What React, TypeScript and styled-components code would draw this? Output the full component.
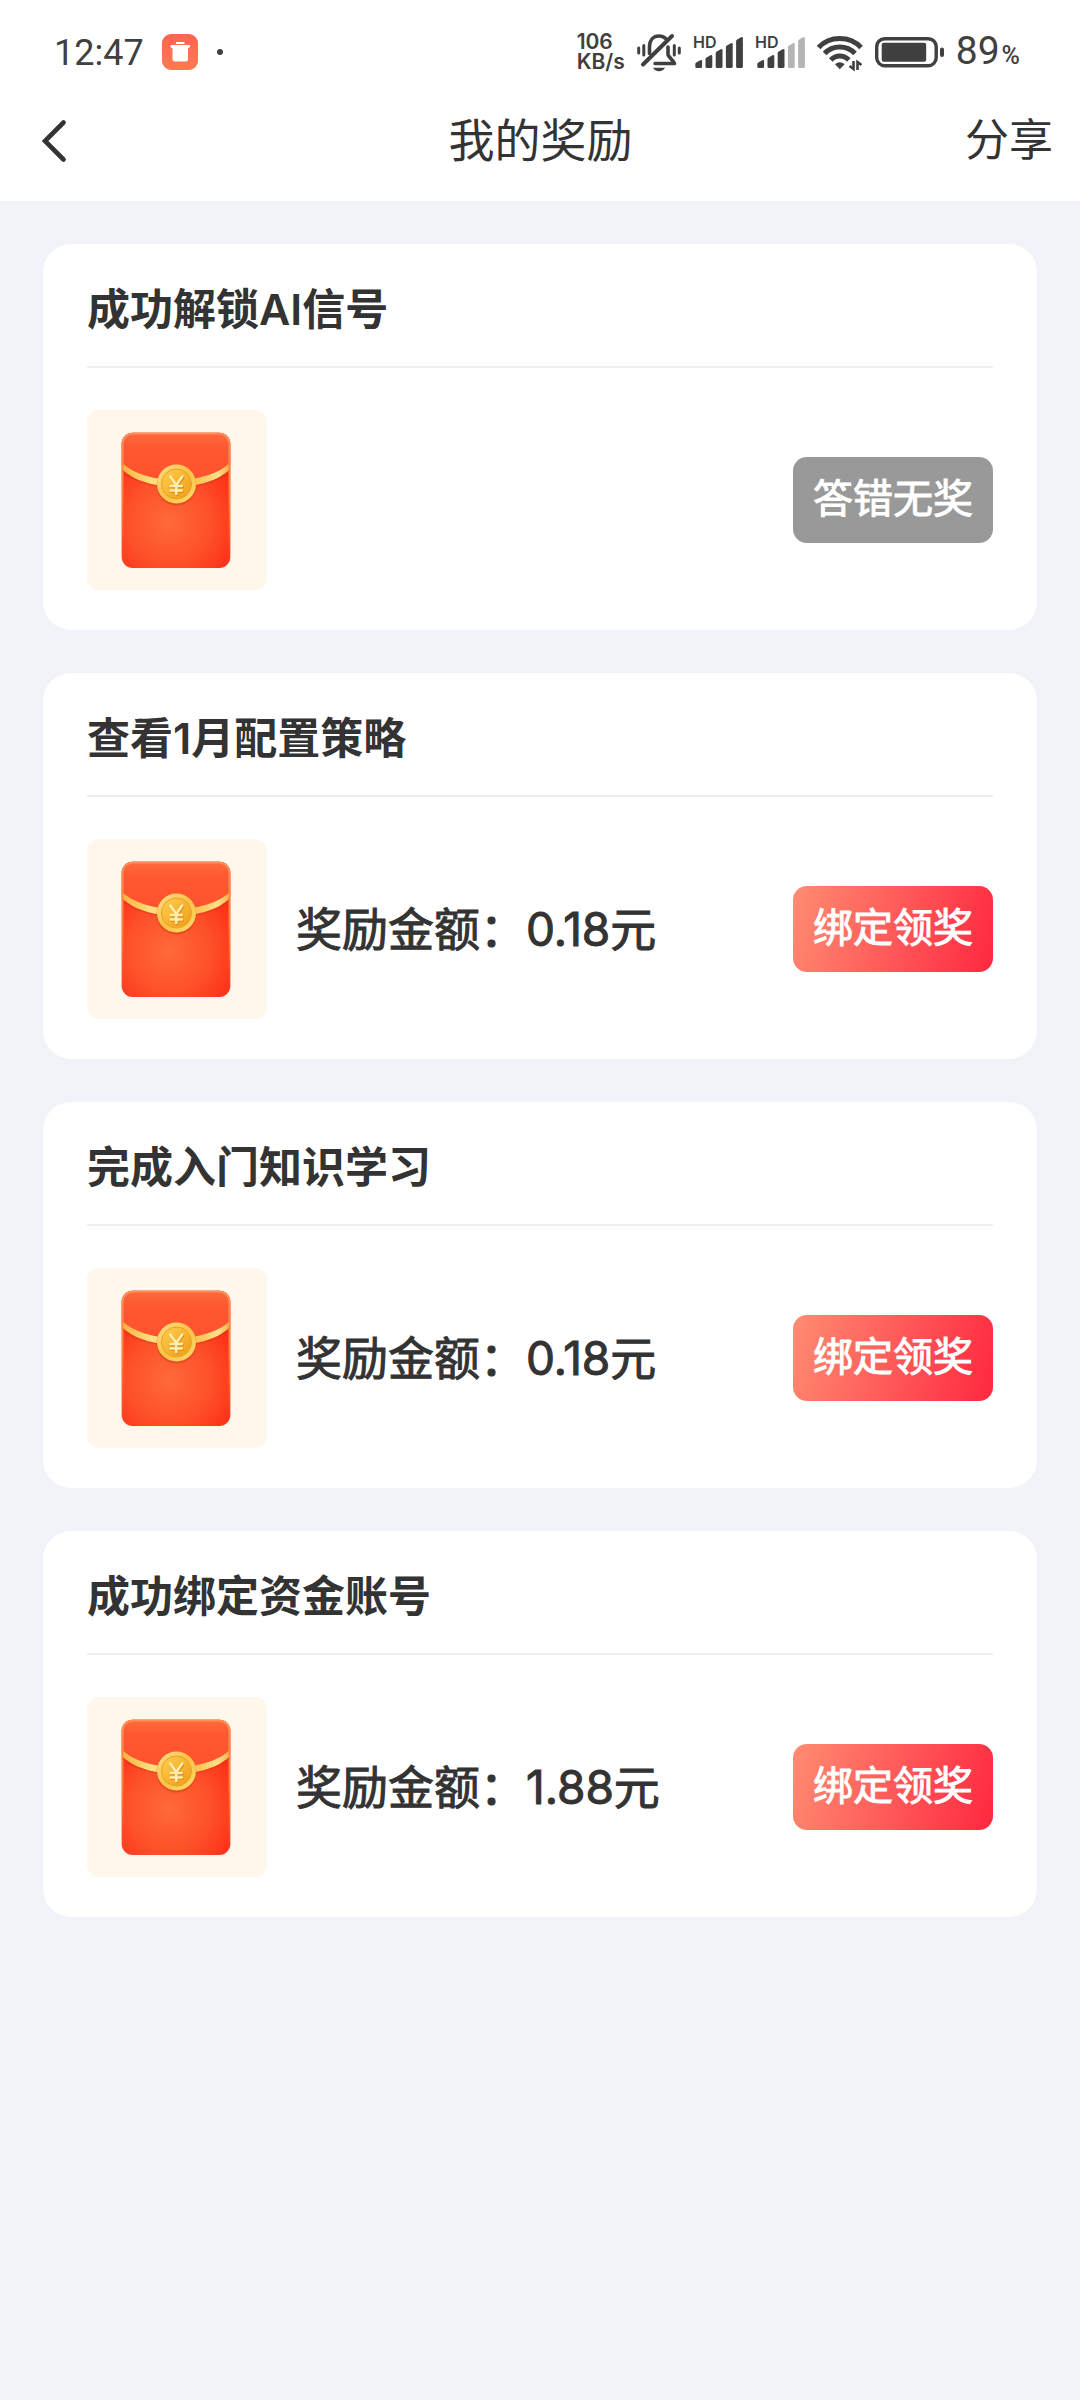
import React, { useId } from "react";
import styled, { createGlobalStyle, css } from "styled-components";

const ink = "#333333";
const statusInk = "#404040";

const GlobalStyle = createGlobalStyle`
  *, *::before, *::after { box-sizing: border-box; }
  body {
    margin: 0;
    min-height: 100vh;
    background: #f2f3f8;
    color: ${ink};
    font-family: Inter, "Noto Sans CJK SC", sans-serif;
  }
  button { font-family: inherit; }
`;

const mediumWeight = css`
  font-weight: 400;
  -webkit-text-stroke: 1px currentColor;
`;

const TopArea = styled.div`
  background: #ffffff;
`;

const StatusBar = styled.div`
  display: flex;
  align-items: center;
  justify-content: space-between;
  height: 80px;
  padding: 24px 60px 0 54px;
  color: ${statusInk};
`;

const StatusGroup = styled.div<{ $gap: number }>`
  display: flex;
  align-items: center;
  gap: ${(p) => p.$gap}px;
`;

const Clock = styled.span`
  padding-top: 2px;
  font-family: Roboto, sans-serif;
  font-size: 36px;
  line-height: 40px;
`;

const NetSpeed = styled.span`
  display: flex;
  flex-direction: column;
  font-size: 21px;
  font-weight: 600;
  line-height: 20px;
`;

const BatteryLevel = styled.span`
  display: flex;
  align-items: baseline;
  gap: 2px;
  padding-top: 2px;
  font-family: Roboto, sans-serif;
  font-size: 39px;
  line-height: 40px;
`;

const Percent = styled.span`
  font-size: 25px;
  font-weight: 500;
`;

const NavBar = styled.header`
  display: grid;
  grid-template-columns: 1fr auto 1fr;
  align-items: center;
  height: 121px;
  padding: 0 27px 0 40px;
`;

const NavTitle = styled.h1`
  margin: 0;
  padding: 0 12px 2px 0;
  font-size: 46px;
  font-weight: 400;
  line-height: 60px;
`;

const NavButton = styled.button`
  display: flex;
  justify-self: start;
  padding: 0;
  border: 0;
  background: none;
  color: inherit;
`;

const ShareButton = styled(NavButton)`
  justify-self: end;
  padding-bottom: 2px;
  font-size: 44px;
  line-height: 60px;
`;

const RewardList = styled.main`
  display: flex;
  flex-direction: column;
  gap: 43px;
  padding: 43px;
`;

const Card = styled.section`
  padding: 0 44px 40px;
  border-radius: 28px;
  background: #ffffff;
`;

const CardTitle = styled.h2`
  margin: 0;
  padding: 35px 0 27px;
  border-bottom: 2px solid #eeeeee;
  font-size: 43px;
  font-weight: 600;
  line-height: 60px;
`;

const CardBody = styled.div`
  display: flex;
  align-items: center;
  padding-top: 42px;
`;

const Thumb = styled.div`
  display: flex;
  width: 180px;
  height: 180px;
  border-radius: 12px;
  background: #fff6ec;
`;

const Amount = styled.p`
  ${mediumWeight}
  margin: 0 0 0 29px;
  font-size: 46px;
  line-height: 60px;
`;

const ActionButton = styled.button<{ $muted?: boolean }>`
  ${mediumWeight}
  height: 86px;
  margin-left: auto;
  padding: 0 20px 2px;
  border: 0;
  border-radius: 14px;
  background: ${(p) =>
    p.$muted ? "#999999" : "linear-gradient(105deg, #ff8c72 0%, #ff2840 100%)"};
  color: #ffffff;
  font-size: 40px;
  line-height: 60px;
`;

function CleanerIcon() {
  return (
    <svg width="36" height="36" viewBox="0 0 36 36" aria-hidden="true">
      <defs>
        <linearGradient id="cleaner" x1="0" y1="0" x2="0" y2="1">
          <stop offset="0" stopColor="#ff6550" />
          <stop offset="1" stopColor="#ff7a50" />
        </linearGradient>
      </defs>
      <rect width="36" height="36" rx="9" fill="url(#cleaner)" />
      <path d="M14 8h8.500v2H14zM8.500 11h19.500v2l-2 1.500V25a2.500 2.500 0 0 1-2.500 2.500h-10.500A2.500 2.500 0 0 1 10.500 25V14.500l-2-1.500z" fill="#fff" />
    </svg>
  );
}

function MutedBellIcon() {
  return (
    <svg width="44" height="39" viewBox="0 0 44 39" fill="none" stroke={statusInk} strokeLinecap="round" aria-hidden="true">
      <path d="M12.500 20.500V14C12.500 7 16.500 3 22 3c2.600 0 5 .9 6.600 2.600" strokeWidth="3.600" />
      <path d="M6 31.500L35 3" strokeWidth="4" />
      <path d="M31 14v7.500c0 2 5 5.500 6.500 9H18" strokeWidth="3.600" strokeLinejoin="round" />
      <path d="M16 34.800h12c-2 4.600-10 4.600-12 0z" fill={statusInk} stroke="none" />
      <path d="M1.700 15v5M6.800 12.500v9.500M37.300 12.500v9.500M42.300 15v5" strokeWidth="3" />
    </svg>
  );
}

function SignalIcon({ bars }: { bars: number }) {
  const tops = [26, 21, 15, 9, 3];
  return (
    <svg width="50" height="36" viewBox="0 0 50 36" overflow="visible" aria-hidden="true">
      <text x="0" y="14" fontFamily="Inter, sans-serif" fontSize="16" fontWeight="600" fill={statusInk}>
        HD
      </text>
      {tops.map((top, i) => {
        const x = 2.300 + i * 10.200;
        return (
          <path
            key={top}
            d={`M${x} ${top + 4}q0-1 1-1.600l4-2.200q1.800-.6 1.800 1V32.500q0 1.500-1.500 1.500h-3.800q-1.500 0-1.500-1.500z`}
            fill={i < bars ? statusInk : "#b5b5b5"}
          />
        );
      })}
    </svg>
  );
}

function WifiIcon() {
  return (
    <svg width="46" height="39" viewBox="0 0 46 39" fill="none" stroke={statusInk} strokeWidth="5" aria-hidden="true">
      <path d="M1.600 14.500C12.500 2.500 33 2.500 44 14.500" />
      <path d="M7.600 20.500c8-8.600 22.300-8.600 30.400 0" />
      <path d="M13.800 27c5-5.300 13-5.300 18 0" />
      <path d="M18 31.200c2.800-2.700 6.800-2.700 9.600 0L22.800 36.200z" fill={statusInk} stroke="none" />
      <path d="M36.500 28v8l-4-3M40.500 37v-8l4 3" strokeWidth="2.600" />
    </svg>
  );
}

function BatteryIcon() {
  return (
    <svg width="69" height="31" viewBox="0 0 69 31" aria-hidden="true">
      <rect x="1.700" y="1.700" width="59.500" height="27" rx="8" fill="none" stroke={statusInk} strokeWidth="3.400" />
      <rect x="6.700" y="5.800" width="44.500" height="19" rx="2" fill={statusInk} />
      <rect x="65" y="10.500" width="4" height="9.500" rx="2" fill={statusInk} />
    </svg>
  );
}

function BackIcon() {
  return (
    <svg width="28" height="44" viewBox="0 0 28 44" fill="none" aria-hidden="true">
      <path d="M23.500 3.500L5 22l18.500 18.500" stroke={ink} strokeWidth="4.600" strokeLinecap="round" strokeLinejoin="miter" />
    </svg>
  );
}

function RedEnvelope() {
  const id = useId();
  const ref = (name: string) => `url(#${id}${name})`;
  return (
    <svg width="180" height="180" viewBox="0 0 180 180" role="img" aria-label="红包">
      <defs>
        <radialGradient id={`${id}body`} gradientUnits="userSpaceOnUse" cx="82" cy="112" r="84">
          <stop offset="0" stopColor="#ff6a38" />
          <stop offset="0.500" stopColor="#fe5029" />
          <stop offset="1" stopColor="#fb2512" />
        </radialGradient>
        <linearGradient id={`${id}flap`} x1="0" y1="0" x2="0" y2="1">
          <stop offset="0" stopColor="#ff6b3d" />
          <stop offset="0.300" stopColor="#ff5931" />
          <stop offset="1" stopColor="#ff522e" />
        </linearGradient>
        <linearGradient id={`${id}edge`} x1="0" y1="0" x2="0" y2="1">
          <stop offset="0" stopColor="#ff8f58" />
          <stop offset="0.500" stopColor="#ff8038" />
          <stop offset="1" stopColor="#ff5a25" stopOpacity="0" />
        </linearGradient>
        <linearGradient id={`${id}band`} x1="0" y1="0" x2="1" y2="0">
          <stop offset="0" stopColor="#f7b03a" />
          <stop offset="0.280" stopColor="#ffdf80" />
          <stop offset="0.720" stopColor="#ffc657" />
          <stop offset="0.880" stopColor="#ffe08a" />
          <stop offset="1" stopColor="#f4aa3c" />
        </linearGradient>
        <linearGradient id={`${id}rim`} x1="0" y1="0" x2="1" y2="1">
          <stop offset="0" stopColor="#ffe08a" />
          <stop offset="0.500" stopColor="#fbc244" />
          <stop offset="1" stopColor="#ffdc70" />
        </linearGradient>
        <linearGradient id={`${id}coin`} x1="0" y1="0" x2="1" y2="1">
          <stop offset="0" stopColor="#ffd052" />
          <stop offset="1" stopColor="#f09a12" />
        </linearGradient>
        <clipPath id={`${id}clip`}>
          <rect x="34.700" y="22.700" width="108.600" height="135.300" rx="11" />
        </clipPath>
      </defs>
      <g clipPath={ref("clip")}>
        <rect x="34" y="22" width="110" height="137" fill={ref("body")} />
        <path d="M34 22h110v33C120 80 58 80 34 55z" fill={ref("flap")} />
        <path d="M34 60C58 82 120 82 144 60" fill="none" stroke="#d9351a" strokeOpacity="0.450" strokeWidth="3" />
        <path d="M34 52C58 76 120 76 144 52V58C121 83 57 83 34 58z" fill={ref("band")} />
        <rect x="35" y="23" width="108" height="134.500" rx="11" fill="none" stroke={ref("edge")} strokeWidth="3" />
      </g>
      <circle cx="89.500" cy="75.500" r="20" fill="#c93a10" fillOpacity="0.450" />
      <circle cx="89.500" cy="74" r="19.500" fill={ref("rim")} />
      <circle cx="89.500" cy="74" r="15" fill={ref("coin")} stroke="#e8a02a" strokeWidth="1" />
      <g fill="none" strokeLinecap="round" strokeWidth="2.600">
        <path d="M84 67.500l6 8.500 6-8.500M90 76v9M84.500 77h11M84.500 81.500h11" stroke="#d98412" />
        <path d="M83.300 66.500l6 8.500 6-8.500M89.300 75v9M83.800 76h11M83.800 80.500h11" stroke="#ffedb0" />
      </g>
    </svg>
  );
}

type Reward = { title: string; amount?: string };

const rewards: Reward[] = [
  { title: "成功解锁AI信号" },
  { title: "查看1月配置策略", amount: "0.18" },
  { title: "完成入门知识学习", amount: "0.18" },
  { title: "成功绑定资金账号", amount: "1.88" },
];

function RewardCard({ title, amount }: Reward) {
  return (
    <Card>
      <CardTitle>{title}</CardTitle>
      <CardBody>
        <Thumb>
          <RedEnvelope />
        </Thumb>
        {amount && <Amount>奖励金额：{amount}元</Amount>}
        <ActionButton type="button" $muted={!amount}>
          {amount ? "绑定领奖" : "答错无奖"}
        </ActionButton>
      </CardBody>
    </Card>
  );
}

export default function App() {
  return (
    <>
      <GlobalStyle />
      <TopArea>
        <StatusBar>
          <StatusGroup $gap={18}>
            <Clock>12:47</Clock>
            <CleanerIcon />
            <svg width="8" height="8" viewBox="0 0 8 8" aria-hidden="true">
              <circle cx="4" cy="4" r="3" fill={statusInk} />
            </svg>
          </StatusGroup>
          <StatusGroup $gap={12}>
            <NetSpeed>
              <span>106</span>
              <span>KB/s</span>
            </NetSpeed>
            <MutedBellIcon />
            <SignalIcon bars={5} />
            <SignalIcon bars={3} />
            <WifiIcon />
            <BatteryIcon />
            <BatteryLevel>
              89<Percent>%</Percent>
            </BatteryLevel>
          </StatusGroup>
        </StatusBar>
        <NavBar>
          <NavButton type="button" aria-label="返回">
            <BackIcon />
          </NavButton>
          <NavTitle>我的奖励</NavTitle>
          <ShareButton type="button">分享</ShareButton>
        </NavBar>
      </TopArea>
      <RewardList>
        {rewards.map((reward) => (
          <RewardCard key={reward.title} {...reward} />
        ))}
      </RewardList>
    </>
  );
}
